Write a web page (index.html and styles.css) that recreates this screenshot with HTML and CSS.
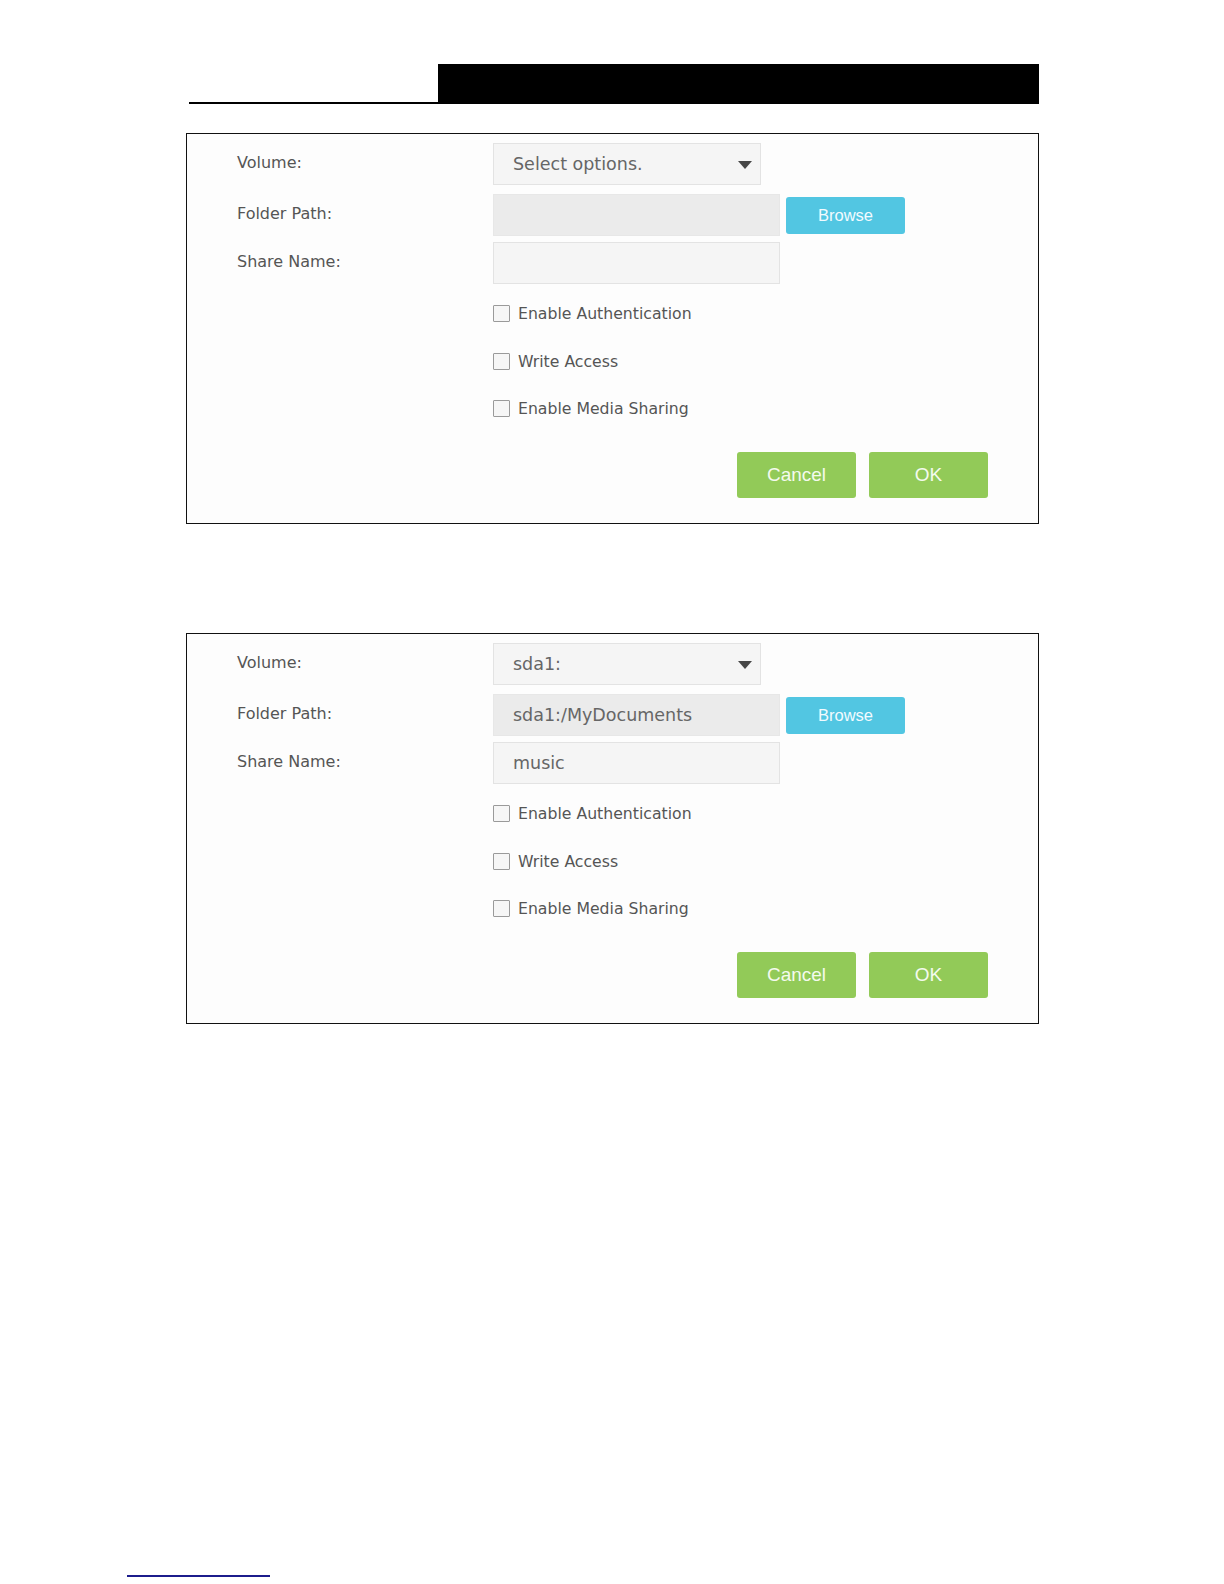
FILE: index.html
```html
<!DOCTYPE html>
<html lang="en">
<head>
    <meta charset="UTF-8">
    <meta name="viewport" content="width=device-width, initial-scale=1.0">
    <title>Share Folder</title>
    <link rel="stylesheet" href="styles.css">
</head>
<body>
    <div class="page">
        <div class="header">
            <div class="header-line"></div>
            <div class="header-bar"></div>
        </div>

        <!-- empty form -->
        <div class="panel">
            <div class="field-row row-volume">
                <div class="label">Volume:</div>
                <div class="select">
                    <span>Select options.</span>
                    <svg class="arrow" width="14" height="8" viewBox="0 0 14 8"><path d="M0 0H14L7 8Z" fill="#474747"/></svg>
                </div>
            </div>
            <div class="field-row">
                <div class="label">Folder Path:</div>
                <div class="input input-disabled"></div>
                <button class="btn-browse">Browse</button>
            </div>
            <div class="field-row">
                <div class="label">Share Name:</div>
                <div class="input"></div>
            </div>
            <div class="checks">
                <div class="check-row"><span class="box"></span>Enable Authentication</div>
                <div class="check-row"><span class="box"></span>Write Access</div>
                <div class="check-row"><span class="box"></span>Enable Media Sharing</div>
            </div>
            <div class="actions">
                <button class="btn-green">Cancel</button>
                <button class="btn-green">OK</button>
            </div>
        </div>

        <!-- filled form -->
        <div class="panel panel-second">
            <div class="field-row row-volume">
                <div class="label">Volume:</div>
                <div class="select">
                    <span>sda1:</span>
                    <svg class="arrow" width="14" height="8" viewBox="0 0 14 8"><path d="M0 0H14L7 8Z" fill="#474747"/></svg>
                </div>
            </div>
            <div class="field-row">
                <div class="label">Folder Path:</div>
                <div class="input input-disabled">sda1:/MyDocuments</div>
                <button class="btn-browse">Browse</button>
            </div>
            <div class="field-row">
                <div class="label">Share Name:</div>
                <div class="input">music</div>
            </div>
            <div class="checks">
                <div class="check-row"><span class="box"></span>Enable Authentication</div>
                <div class="check-row"><span class="box"></span>Write Access</div>
                <div class="check-row"><span class="box"></span>Enable Media Sharing</div>
            </div>
            <div class="actions">
                <button class="btn-green">Cancel</button>
                <button class="btn-green">OK</button>
            </div>
        </div>

        <div class="footer-line"></div>
    </div>
</body>
</html>
```
FILE: styles.css
```css
:root {
    --label-color: #555555;
    --value-color: #666666;
    --field-bg: #f5f5f5;
    --field-border: #e3e3e3;
    --disabled-bg: #ebebeb;
    --cyan: #52c6e2;
    --green: #92ca58;
}

body {
    margin: 0;
    padding: 0;
    background: #ffffff;
    font-family: 'DejaVu Sans', 'Verdana', sans-serif;
}

.page {
    padding-top: 64px;
    padding-bottom: 8px;
}

.header {
    display: flex;
    margin-left: 189px;
    width: 850px;
    height: 40px;
}

.header-line {
    width: 249px;
    border-bottom: 2px solid #000;
}

.header-bar {
    flex: 1;
    background: #000;
}

.panel {
    box-sizing: border-box;
    margin-top: 29px;
    margin-left: 186px;
    width: 853px;
    height: 391px;
    border: 1px solid #111;
    background: #fdfdfd;
    padding: 9px 50px 0 50px;
}

.panel-second {
    margin-top: 109px;
}

.field-row {
    display: flex;
    align-items: center;
    height: 42px;
    margin-bottom: 6px;
}

.row-volume {
    margin-bottom: 9px;
}

.label {
    width: 256px;
    font-size: 16px;
    color: var(--label-color);
    margin-top: -3px;
}

.select,
.input {
    box-sizing: border-box;
    height: 42px;
    display: flex;
    align-items: center;
    padding-left: 19px;
    font-size: 17.5px;
    color: var(--value-color);
    background: var(--field-bg);
    border: 1px solid var(--field-border);
}

.select {
    width: 268px;
    justify-content: space-between;
    padding-right: 8px;
}

.select .arrow {
    margin-top: 1px;
}

.input {
    width: 287px;
}

.input-disabled {
    background: var(--disabled-bg);
    border-color: #e7e7e7;
}

.btn-browse {
    margin-left: 6px;
    width: 119px;
    height: 37px;
    border: none;
    border-radius: 3px;
    background: var(--cyan);
    color: #f2fbff;
    font-family: 'Liberation Sans', Arial, sans-serif;
    font-size: 16.5px;
    padding: 0;
}

.checks {
    margin-top: 1px;
    padding-left: 256px;
}

.check-row {
    display: flex;
    align-items: center;
    height: 47.5px;
    font-size: 15.7px;
    color: var(--label-color);
}

.box {
    box-sizing: border-box;
    width: 17px;
    height: 17px;
    margin-right: 8px;
    border: 1px solid #9a9a9a;
    border-radius: 1px;
    background: #f6f6f6;
}

.actions {
    display: flex;
    justify-content: flex-end;
    gap: 13px;
    margin-top: 19px;
}

.btn-green {
    width: 119px;
    height: 46px;
    border: none;
    border-radius: 3px;
    background: var(--green);
    color: #f4faee;
    font-family: 'Liberation Sans', Arial, sans-serif;
    font-size: 19px;
    padding: 0;
}

.footer-line {
    margin-top: 551px;
    margin-left: 127px;
    width: 143px;
    height: 2px;
    background: #1c1c8c;
}
```
